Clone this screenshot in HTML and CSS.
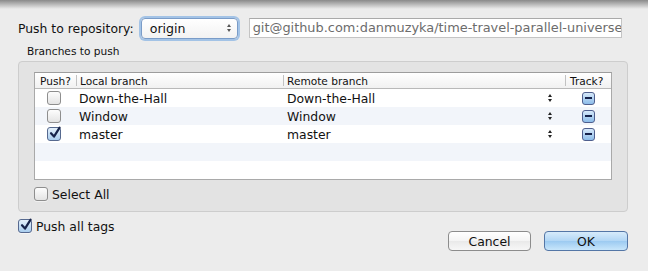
FILE: index.html
```html
<!DOCTYPE html>
<html>
<head>
<meta charset="utf-8">
<link rel="stylesheet" href="styles.css">
</head>
<body>
<div class="sheet">
  <div class="repo-row">
    <span class="label">Push to repository:</span>
    <div class="popup">
      <span>origin</span>
      <span class="updown"><i class="up"></i><i class="down"></i></span>
    </div>
    <div class="urlfield">git@github.com:danmuzyka/time-travel-parallel-universe</div>
  </div>
  <div class="group-label">Branches to push</div>
  <div class="group">
    <div class="table">
      <div class="thead">
        <div class="th c1">Push?</div>
        <div class="th c2">Local branch</div>
        <div class="th c3">Remote branch</div>
        <div class="th c4">Track?</div>
      </div>
      <div class="tr">
        <div class="td c1"><span class="cb"></span></div>
        <div class="td c2">Down-the-Hall</div>
        <div class="td c3"><span>Down-the-Hall</span><span class="updown"><i class="up"></i><i class="down"></i></span></div>
        <div class="td c4"><span class="mixed"><i></i></span></div>
      </div>
      <div class="tr alt">
        <div class="td c1"><span class="cb"></span></div>
        <div class="td c2">Window</div>
        <div class="td c3"><span>Window</span><span class="updown"><i class="up"></i><i class="down"></i></span></div>
        <div class="td c4"><span class="mixed"><i></i></span></div>
      </div>
      <div class="tr">
        <div class="td c1"><span class="cb checked"><svg viewBox="0 0 14 14" width="14" height="14"><path d="M3 7.2 L6 10.6 L11.6 1.6" fill="none" stroke="#16234a" stroke-width="2.2" stroke-linecap="round" stroke-linejoin="round"/></svg></span></div>
        <div class="td c2">master</div>
        <div class="td c3"><span>master</span><span class="updown"><i class="up"></i><i class="down"></i></span></div>
        <div class="td c4"><span class="mixed"><i></i></span></div>
      </div>
      <div class="tr alt"></div>
    </div>
    <label class="check-row select-all"><span class="cb"></span><span>Select All</span></label>
  </div>
  <label class="check-row tags"><span class="cb checked"><svg viewBox="0 0 14 14" width="14" height="14"><path d="M3 7.2 L6 10.6 L11.6 1.6" fill="none" stroke="#16234a" stroke-width="2.2" stroke-linecap="round" stroke-linejoin="round"/></svg></span><span>Push all tags</span></label>
  <div class="buttons">
    <div class="btn">Cancel</div>
    <div class="btn default">OK</div>
  </div>
</div>
</body>
</html>
```
FILE: styles.css
```css
* { box-sizing: border-box; }
html, body { margin: 0; padding: 0; }
body {
  width: 648px;
  height: 271px;
  overflow: hidden;
  position: relative;
  background: #ececec;
  font-family: "DejaVu Sans", "Noto Sans", sans-serif;
  font-size: 12.4px;
  color: #111;
}
body::before {
  content: "";
  position: absolute;
  left: 0; right: 0; top: 0;
  height: 9px;
  background: linear-gradient(#8a8a8a, rgba(236,236,236,0));
  z-index: 3;
}
.sheet {
  position: relative;
  z-index: 1;
  padding: 17px 20px 0 18px;
  display: flex;
  flex-direction: column;
}
.repo-row { display: flex; align-items: center; height: 22px; }
.label { margin-right: 7px; }
.popup {
  width: 97px; height: 21px;
  border: 1px solid #7a9cc8;
  border-radius: 4px;
  box-shadow: 0 0 0 2px #a3c3e6;
  background: linear-gradient(#ffffff, #f2f2f2);
  display: flex; align-items: center; justify-content: space-between;
  padding: 0 6px 0 8px;
  font-size: 12.6px;
}
.updown { display: inline-flex; flex-direction: column; align-items: center; gap: 2px; }
.updown i { display: block; width: 0; height: 0; border-left: 2.5px solid transparent; border-right: 2.5px solid transparent; }
.updown .up { border-bottom: 3.5px solid #222; }
.updown .down { border-top: 3.5px solid #222; }
.popup .updown .up { border-bottom-color: #555; }
.popup .updown .down { border-top-color: #555; }
.urlfield {
  margin-left: 11px;
  width: 373px; height: 20px;
  background: #fff;
  border: 1px solid #c4c4c4;
  border-top-color: #a9a9a9;
  color: #6c6c6c;
  padding: 0 3px;
  line-height: 18px;
  font-size: 12.9px;
  white-space: nowrap;
  overflow: hidden;
  text-overflow: clip;
}
.group-label { font-size: 10.6px; margin: 5px 0 0 9px; height: 14px; line-height: 14px; }
.group {
  margin-top: 3px;
  width: 610px; height: 151px;
  background: #e3e3e3;
  border: 1px solid #cdcdcd;
  border-radius: 4px;
  padding: 10px 0 0 15px;
}
.table {
  width: 578px; height: 108px;
  background: #fff;
  border: 1px solid #a9a9a9;
  border-top-color: #9d9d9d;
}
.thead, .tr {
  display: grid;
  grid-template-columns: 41px 207px 282px 1fr;
}
.thead {
  height: 16px;
  background: linear-gradient(#ffffff, #f1f1f1);
  border-bottom: 1px solid #b9b9b9;
  font-size: 10.6px;
}
.th { display: flex; align-items: center; padding-left: 4px; position: relative; }
.th + .th::before {
  content: ""; position: absolute; left: 0; top: 2px; bottom: 2px;
  width: 1px; background: #c2c2c2;
}
.th.c1 { padding-left: 5px; }
.th.c4 { padding-left: 5px; }
.tr { height: 18px; }
.tr.alt { background: #f2f5fa; }
.td { display: flex; align-items: center; }
.td.c1 { padding-left: 12px; }
.td.c2 { padding-left: 3px; }
.td.c3 { padding-left: 4px; justify-content: space-between; padding-right: 13px; }
.td.c4 { justify-content: center; padding-left: 1px; }
.cb {
  display: inline-block;
  width: 14px; height: 14px;
  border: 1px solid #8e8e8e;
  border-radius: 3px;
  background: linear-gradient(#fdfdfd, #e4e4e4);
  box-shadow: 0 1px 0 rgba(255,255,255,0.5);
  position: relative;
  flex: none;
}
.cb.checked {
  border-color: #56698f;
  background: linear-gradient(#e4f0fb, #a9cdee);
}
.cb svg { position: absolute; left: 0; top: -2px; }
.mixed {
  display: inline-block;
  width: 13px; height: 13px;
  border: 1px solid #4f5f8e;
  border-radius: 3px;
  background: linear-gradient(#d7e9fa, #8cbce9);
  position: relative;
}
.mixed i {
  position: absolute; left: 2px; right: 2px; top: 4.5px; height: 2px;
  background: #15214a;
}
.check-row { display: flex; align-items: center; gap: 4px; }
.select-all { margin-top: 7px; height: 14px; }
.tags { margin-top: 7px; height: 14px; }
.buttons {
  display: flex; justify-content: flex-end; gap: 13px;
  margin-top: -2px;
}
.btn {
  width: 83px; height: 20px;
  border: 1px solid #8c8c8c;
  border-radius: 4px;
  background: linear-gradient(#ffffff, #f4f4f4 50%, #e9e9e9 51%, #f7f7f7);
  display: flex; align-items: center; justify-content: center;
  font-size: 12.4px;
}
.btn.default {
  width: 84px;
  border-color: #5476a6;
  background: linear-gradient(#d7ebfb, #b1d6f5 50%, #9ccaf1 51%, #c8e6fb);
}
```
